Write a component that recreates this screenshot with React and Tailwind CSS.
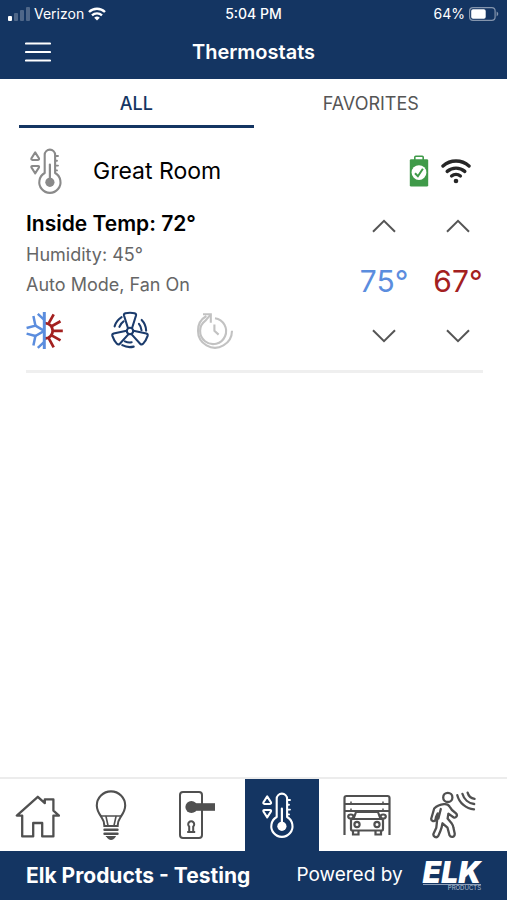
import { useState } from "react";

const SignalIcon = () => (
  <svg width="22" height="14" viewBox="0 0 22 14" fill="#fff">
    <rect x="0" y="9" width="4" height="5" rx="1" />
    <rect x="6" y="6" width="4" height="8" rx="1" opacity="0.25" />
    <rect x="12" y="3" width="4" height="11" rx="1" opacity="0.25" />
    <rect x="18" y="0" width="4" height="14" rx="1" opacity="0.25" />
  </svg>
);

const StatusWifiIcon = () => (
  <svg width="18" height="14" viewBox="0 0 18 14" fill="none" stroke="#fff">
    <path d="M1 5a11.4 11.4 0 0 1 16 0" strokeWidth="2.4" />
    <path d="M4 8.3a7.2 7.2 0 0 1 10 0" strokeWidth="2.3" />
    <path d="M9 13.6L6.2 10.8a4 4 0 0 1 5.6 0z" fill="#fff" stroke="none" />
  </svg>
);

const StatusBatteryIcon = () => (
  <svg width="30" height="14" viewBox="0 0 30 14" fill="none">
    <rect x="0.6" y="0.6" width="25.5" height="12.8" rx="3.4" stroke="#8495ad" strokeWidth="1.2" />
    <rect x="2.2" y="2.3" width="14.5" height="9.4" rx="1.8" fill="#fff" />
    <path d="M27.6 4.6c2.2 1 2.2 3.8 0 4.8z" fill="#8495ad" />
  </svg>
);

const MenuIcon = () => (
  <svg width="26" height="20" viewBox="0 0 26 20" stroke="#fff" strokeWidth="2.2" strokeLinecap="round">
    <path d="M1 1.5h24M1 10h24M1 18.5h24" />
  </svg>
);

const ThermostatIcon = () => (
  <svg
    width="34"
    height="48"
    viewBox="0 0 34 48"
    fill="none"
    stroke="currentColor"
    strokeWidth="2.1"
    strokeLinejoin="round"
    strokeLinecap="round"
  >
    <path d="M15.7 26V7.8a5.2 5.2 0 0 1 10.4 0V26a10.6 10.6 0 1 1-10.4 0z" />
    <path d="M20.9 17.5V33" strokeWidth="2.2" />
    <circle cx="20.9" cy="35.3" r="4.6" fill="currentColor" stroke="none" />
    <path d="M27 9h2M27 13.8h1M27 18.6h2M27 23.4h1" strokeWidth="1.9" />
    <path d="M6.2 5.4L10 11.4q.5 1.4-1 1.5H3.4q-1.5-.1-1-1.5z" strokeWidth="2" />
    <path d="M6.2 26.4L10 20.4q.5-1.4-1-1.5H3.4q-1.5.1-1 1.5z" strokeWidth="2" />
  </svg>
);

const BatteryOkIcon = () => (
  <svg width="20" height="32" viewBox="0 0 20 32" fill="none">
    <path d="M5.8 5V2.2q0-1 1-1h6.4q1 0 1 1V5" stroke="#3f9a49" strokeWidth="1.6" />
    <rect x="0.8" y="4.2" width="18.4" height="27.4" rx="1.4" fill="#3f9a49" />
    <circle cx="10" cy="17.6" r="7.4" fill="#fff" />
    <path d="M6 18.2l2.9 3 5-7.4" stroke="#3f9a49" strokeWidth="2" />
  </svg>
);

const WifiIcon = () => (
  <svg width="30" height="26" viewBox="0 0 30 26" fill="none" stroke="#262626" strokeWidth="3.4" strokeLinecap="round">
    <path d="M2 8a19.6 19.6 0 0 1 26 0" />
    <path d="M6.2 13.4a13.4 13.4 0 0 1 17.6 0" />
    <path d="M10.6 18a6.9 6.9 0 0 1 8.8 0" />
    <circle cx="15" cy="23" r="2.3" fill="#262626" stroke="none" />
  </svg>
);

const HeatCoolIcon = () => (
  <svg width="38" height="38" viewBox="0 0 38 38" fill="none">
    <g stroke="#a3201f" strokeWidth="2.7">
      <path d="M19 12.1a7.7 7.7 0 0 1 0 15.4" strokeWidth="2.8" />
      <path d="M27 19.8h9.8M25.6 15.2l8.9-5M22.8 12.2l4.9-8.9M25.6 24.4l8.9 5M22.8 27.4l4.9 8.9" />
    </g>
    <g stroke="#5b8dde" strokeWidth="2.5">
      <path d="M18.3 1v37.2" strokeWidth="3" />
      <path d="M18.3 19.8L9.4 14.6M18.3 19.8L9.4 25" />
      <path d="M7.4 5l2 9.6L.6 17M7.4 34.6l2-9.6L.6 22.6" />
      <path d="M11.8 2.8l6.5 6M11.8 36.8l6.5-6" />
    </g>
  </svg>
);

const FAN_ANGLES = [0, 120, 240];

const FanIcon = () => (
  <svg width="40" height="40" viewBox="0 0 40 40" fill="none" stroke="#1b3b6c" strokeWidth="2.1" strokeLinecap="round">
    <circle cx="20" cy="21" r="3.2" />
    {FAN_ANGLES.map((angle) => (
      <g key={angle} transform={`rotate(${angle} 20 21)`}>
        <path d="M18 18.2L14 5.6Q13.6 3.800 15.400 3.300Q20 2.300 24.600 3.300Q26.400 3.800 26 5.600L22 18.200" />
        <path d="M4.600 16.400a16 16 0 0 1 7-9.200" />
        <path d="M9.400 16.800a11.500 11.500 0 0 1 4.200-5.400" />
      </g>
    ))}
  </svg>
);

const ScheduleIcon = () => (
  <svg width="38" height="38" viewBox="0 0 38 38" fill="none" stroke="#c2c2c2" strokeWidth="2.1">
    <path d="M36 19.8A17 17 0 1 1 10.4 5" />
    <path d="M7 3.2h7.8v8.6" />
    <path d="M14.8 3.4L9.4 9.6A13 13 0 1 0 19 7.2" />
    <path d="M18.4 13.6v6.2l4.2 3.8" />
  </svg>
);

const Chevron = ({ down }) => (
  <svg
    className={down ? "rotate-180" : ""}
    width="24"
    height="14"
    viewBox="0 0 24 14"
    fill="none"
    stroke="#555"
    strokeWidth="2"
  >
    <path d="M1 12.8L12 1.8l11 11" />
  </svg>
);

const HomeIcon = () => (
  <svg width="46" height="46" viewBox="0 0 46 46" fill="none" stroke="#505050" strokeWidth="2.3" strokeLinejoin="round">
    <path d="M23.8 4.8L2.8 23.6h5.4V44.4h11V31h9v13.4h11.2V23.6H45L39.4 18.6V7.4h-8.600v3.800z" />
  </svg>
);

const BulbIcon = () => (
  <svg width="34" height="54" viewBox="0 0 34 54" fill="none" stroke="#505050" strokeWidth="2.1" strokeLinecap="round">
    <path d="M10.4 38c0-4-1.2-6.4-3-9C4.8 25.5 2.8 22 2.8 17.6a14.2 14.2 0 0 1 28.4 0c0 4.400-2 7.900-4.600 11.400-1.800 2.600-3 5-3 9z" />
    <path d="M7.5 28h19" strokeWidth="1.6" />
    <path d="M12 28.5l2 9M22 28.5l-2 9" strokeWidth="1.6" />
    <path d="M10.5 41.8h13M10.5 45.8h13" strokeWidth="2.4" />
    <path d="M12.5 48.5h9q-1.5 3-4.5 3t-4.5-3z" fill="#505050" strokeWidth="1" />
  </svg>
);

const LockIcon = () => (
  <svg width="38" height="50" viewBox="0 0 38 50" fill="none" stroke="#505050" strokeWidth="2">
    <rect x="2" y="2" width="22" height="46" rx="3" />
    <circle cx="13.4" cy="17" r="6" fill="#505050" stroke="none" />
    <path d="M13 13.2h24v7.6H13z" fill="#505050" stroke="none" />
    <path d="M11.2 42v-5.4a3 3 0 1 1 4 0V42" />
    <path d="M9.2 42h8" />
  </svg>
);

const GarageIcon = () => (
  <svg width="50" height="44" viewBox="0 0 50 44" fill="none" stroke="#505050" strokeWidth="2.2">
    <path d="M2.5 42V5q0-2 2-2h41q2 0 2 2v37" />
    <path d="M3 11h44M3 18h44" />
    <path d="M9 8.5v2M41 8.5v2M9 15.5v2M41 15.5v2" strokeWidth="1.5" />
    <path d="M11.5 26L14 19h22l2.5 7" />
    <rect x="9" y="26" width="32" height="11.5" rx="1.5" />
    <ellipse cx="8.8" cy="23.5" rx="2.6" ry="2" />
    <ellipse cx="41.2" cy="23.5" rx="2.6" ry="2" />
    <circle cx="15" cy="31.5" r="2.6" />
    <circle cx="35" cy="31.5" r="2.6" />
    <path d="M11 38v3.5h5.5V38M33.5 38v3.5H39V38" />
  </svg>
);

const MotionIcon = () => (
  <svg
    width="46"
    height="50"
    viewBox="0 0 46 50"
    fill="none"
    stroke="#505050"
    strokeWidth="2.3"
    strokeLinecap="round"
    strokeLinejoin="round"
  >
    <circle cx="17.8" cy="7.4" r="4.6" />
    <path d="M4.2 18.5Q8 14.8 14 14.2q4-.4 5.6 2.4l2.4 3.4 4 3.4q1.6 1.6.4 3.2t-3 .6l-5-3.6-.8 5 4.2 5q1.5 2 1.6 4l1.3 6q.2 2.8-2 3.2t-3.2-1.6l-2-7.5-5-4.4q-.8 5-2.2 8l-2 4.6q-1.4 2-3.4 1t-1.4-3.2l2.8-6 .7-6.4.8-8-1.8 3.6-.5 2.8q-.8 1.800-2.600 1.400t-1.700-2.400z" />
    <path d="M10.8 19l-2.4 9.5" />
    <path d="M27.3 5.2A19 19 0 0 0 44 19.4M32.4 3.8A14 14 0 0 0 44.2 14M37.6 2.6A8.5 8.5 0 0 0 44.6 8.8" />
  </svg>
);

const navItems = [
  { name: "Home", Icon: HomeIcon },
  { name: "Lights", Icon: BulbIcon },
  { name: "Locks", Icon: LockIcon },
  { name: "Thermostats", Icon: ThermostatIcon },
  { name: "Garage", Icon: GarageIcon },
  { name: "Motion", Icon: MotionIcon },
];

const Setpoint = ({ label, value, color, onChange }) => (
  <div className="flex w-[74px] flex-col items-center">
    <button type="button" aria-label={`Raise ${label}`} className="flex h-6 items-center" onClick={() => onChange(value + 1)}>
      <Chevron />
    </button>
    <div className={`flex h-[86px] items-center text-[30px] ${color}`}>{value}°</div>
    <button type="button" aria-label={`Lower ${label}`} className="flex h-6 items-center" onClick={() => onChange(value - 1)}>
      <Chevron down />
    </button>
  </div>
);

const App = () => {
  const [tab, setTab] = useState("ALL");
  const [page, setPage] = useState("Thermostats");
  const [cool, setCool] = useState(75);
  const [heat, setHeat] = useState(67);

  return (
    <div className="flex min-h-screen flex-col bg-white font-['Inter',sans-serif] text-black">
      <header className="bg-[#143562] text-white">
        <div className="grid h-7 grid-cols-3 items-center px-2 text-sm">
          <div className="flex items-center gap-1">
            <SignalIcon />
            <span>Verizon</span>
            <StatusWifiIcon />
          </div>
          <span className="text-center font-medium">5:04 PM</span>
          <div className="flex items-center justify-end gap-1">
            <span>64%</span>
            <StatusBatteryIcon />
          </div>
        </div>
        <div className="grid h-[51px] grid-cols-[26px_1fr_26px] items-center px-[25px] pb-1">
          <button type="button" aria-label="Menu">
            <MenuIcon />
          </button>
          <h1 className="text-center text-xl font-semibold">Thermostats</h1>
        </div>
      </header>

      <div className="grid grid-cols-2 px-[19px]">
        {["ALL", "FAVORITES"].map((name) => (
          <button
            key={name}
            type="button"
            onClick={() => setTab(name)}
            className={`h-[49px] border-b-3 pt-1 text-lg ${
              tab === name ? "border-[#143562] font-medium text-[#143562]" : "border-transparent text-[#555]"
            }`}
          >
            {name}
          </button>
        ))}
      </div>

      <main className="flex-1 pr-6 pl-[26px]">
        <section className="border-b-3 border-[#efefef] pb-5">
          <div className="flex h-[86px] items-center pr-3 pl-[3px] text-[#8a8a8a]">
            <ThermostatIcon />
            <h2 className="ml-[30px] flex-1 text-[23px] text-black">Great Room</h2>
            <BatteryOkIcon />
            <span className="ml-3">
              <WifiIcon />
            </span>
          </div>
          <div className="flex justify-between">
            <div>
              <p className="text-[21px] leading-5 font-semibold">Inside Temp: 72°</p>
              <p className="mt-3 text-lg leading-[18px] text-[#666]">Humidity: 45°</p>
              <p className="mt-3 text-lg leading-[18px] text-[#666]">Auto Mode, Fan On</p>
              <div className="mt-4 flex gap-[46px]">
                <button type="button" aria-label="Mode">
                  <HeatCoolIcon />
                </button>
                <button type="button" aria-label="Fan">
                  <FanIcon />
                </button>
                <button type="button" aria-label="Schedule">
                  <ScheduleIcon />
                </button>
              </div>
            </div>
            <div className="-mr-3 flex">
              <Setpoint label="cool setpoint" value={cool} color="text-[#5b8dde]" onChange={setCool} />
              <Setpoint label="heat setpoint" value={heat} color="text-[#a3201f]" onChange={setHeat} />
            </div>
          </div>
        </section>
      </main>

      <nav className="grid h-[74px] grid-cols-[74fr_74fr_97fr_74fr_96fr_76fr] border-t-2 border-[#ececec] pr-4">
        {navItems.map(({ name, Icon }) => (
          <button
            key={name}
            type="button"
            aria-label={name}
            onClick={() => setPage(name)}
            className={`flex items-center justify-center ${
              page === name ? "bg-[#143562] pr-2 text-white" : "text-[#505050]"
            }`}
          >
            <Icon />
          </button>
        ))}
      </nav>

      <footer className="flex h-[49px] items-center bg-[#143562] px-[26px] text-white">
        <span className="text-[21px] font-bold">Elk Products - Testing</span>
        <span className="ml-auto text-[19px]">Powered by</span>
        <div className="ml-5 flex flex-col items-end">
          <span className="border-b border-[#8fa0b9] text-[30px] leading-6 font-black italic">ELK</span>
          <span className="text-[6px] leading-[6px] text-[#b5c1d2]">PRODUCTS</span>
        </div>
      </footer>
    </div>
  );
};

export default App;
